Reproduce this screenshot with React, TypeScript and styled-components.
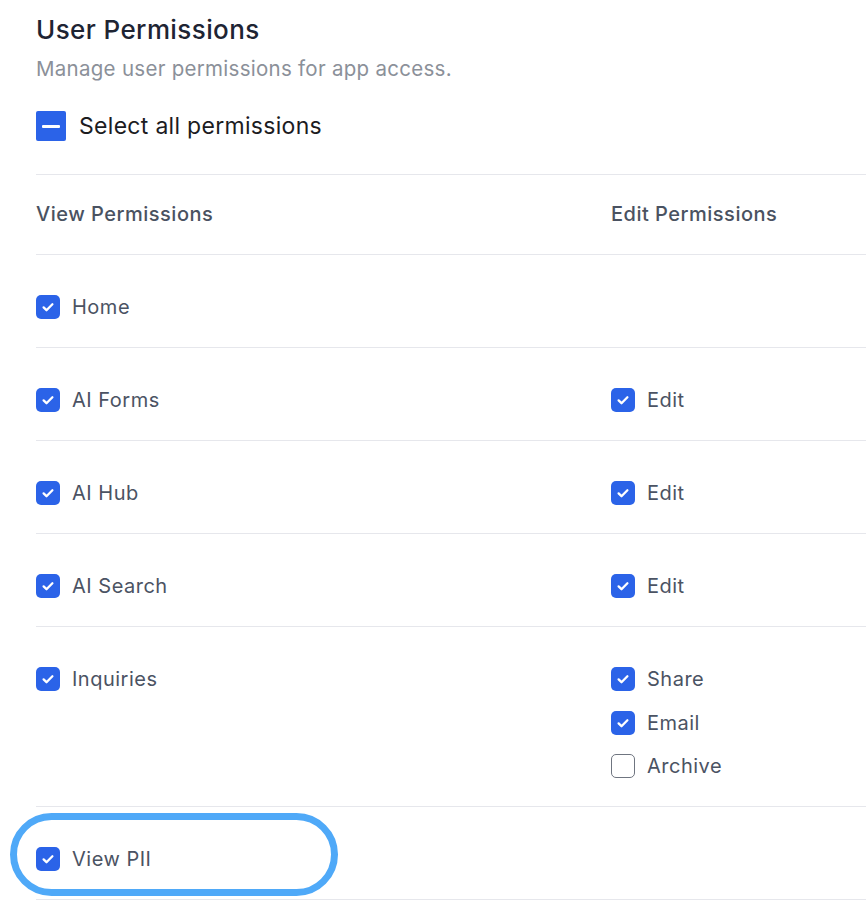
import React from 'react';
import styled, { createGlobalStyle } from 'styled-components';

const GlobalStyle = createGlobalStyle`
  html, body {
    margin: 0;
    padding: 0;
    background: #ffffff;
    overflow: hidden;
  }
  body {
    font-family: Inter, "Noto Sans", "Liberation Sans", sans-serif;
    -webkit-font-smoothing: antialiased;
  }
`;

type Perm = { label: string; checked: boolean };

type Row = {
  view: Perm;
  edit: Perm[];
  highlight?: boolean;
};

const rows: Row[] = [
  { view: { label: 'Home', checked: true }, edit: [] },
  { view: { label: 'AI Forms', checked: true }, edit: [{ label: 'Edit', checked: true }] },
  { view: { label: 'AI Hub', checked: true }, edit: [{ label: 'Edit', checked: true }] },
  { view: { label: 'AI Search', checked: true }, edit: [{ label: 'Edit', checked: true }] },
  {
    view: { label: 'Inquiries', checked: true },
    edit: [
      { label: 'Share', checked: true },
      { label: 'Email', checked: true },
      { label: 'Archive', checked: false },
    ],
  },
  { view: { label: 'View PII', checked: true }, edit: [], highlight: true },
];

const Page = styled.div`
  padding: 14px 0 0 36px;
  width: 830px;
`;

const Title = styled.h1`
  margin: 0;
  font-size: 26px;
  line-height: 32px;
  font-weight: 500;
  color: #1e2433;
  letter-spacing: 0.4px;
`;

const Subtitle = styled.p`
  margin: 10px 0 0;
  font-size: 20.5px;
  line-height: 26px;
  letter-spacing: 0.28px;
  color: #8b9099;
`;

const SelectAll = styled.label`
  display: flex;
  align-items: center;
  gap: 13px;
  margin-top: 29px;
  height: 30px;
  font-size: 23px;
  letter-spacing: 0.3px;
  color: #1c1c1f;
`;

const BigBox = styled.span`
  width: 30px;
  height: 30px;
  border-radius: 2px;
  background: #2b63e8;
  display: flex;
  align-items: center;
  justify-content: center;

  &::after {
    content: '';
    width: 18px;
    height: 3px;
    border-radius: 1px;
    background: #ffffff;
  }
`;

const Table = styled.div`
  margin-top: 33px;
  border-top: 1px solid #e6e7ec;
`;

const Grid = styled.div<{ $head?: boolean }>`
  position: relative;
  display: grid;
  grid-template-columns: 575px 1fr;
  padding: ${(p) => (p.$head ? '27px 0 28px' : '36px 0 24px')};
  border-bottom: 1px solid #e6e7ec;
`;

const HeadCell = styled.div`
  font-size: 20px;
  line-height: 24px;
  letter-spacing: 0.5px;
  font-weight: 500;
  color: #4a5261;
`;

const Stack = styled.div`
  display: flex;
  flex-direction: column;
  gap: 11.5px;
`;

const Item = styled.label`
  display: flex;
  align-items: center;
  gap: 12px;
  height: 32px;
  font-size: 20px;
  letter-spacing: 0.5px;
  color: #4b5363;
`;

const Box = styled.span<{ $checked: boolean }>`
  box-sizing: border-box;
  flex: none;
  width: 24px;
  height: 24px;
  border-radius: 5px;
  display: flex;
  align-items: center;
  justify-content: center;
  background: ${(p) => (p.$checked ? '#2b63e8' : '#ffffff')};
  border: ${(p) => (p.$checked ? 'none' : '1.5px solid #6f7580')};
`;

const Highlight = styled.span`
  position: absolute;
  left: -26px;
  top: 6px;
  width: 328px;
  height: 83px;
  box-sizing: border-box;
  border: 7px solid #4fa9f8;
  border-radius: 42px;
  pointer-events: none;
`;

function Check({ checked }: { checked: boolean }) {
  return (
    <Box $checked={checked}>
      {checked && (
        <svg width="16" height="16" viewBox="0 0 16 16" fill="none">
          <path
            d="M3.6 8.4l2.9 2.8L12.4 5.2"
            stroke="#ffffff"
            strokeWidth="2.3"
            strokeLinecap="round"
            strokeLinejoin="round"
          />
        </svg>
      )}
    </Box>
  );
}

function PermItem({ perm }: { perm: Perm }) {
  return (
    <Item>
      <Check checked={perm.checked} />
      {perm.label}
    </Item>
  );
}

export default function App() {
  return (
    <>
      <GlobalStyle />
      <Page>
        <Title>User Permissions</Title>
        <Subtitle>Manage user permissions for app access.</Subtitle>
        <SelectAll>
          <BigBox />
          Select all permissions
        </SelectAll>
        <Table>
          <Grid $head>
            <HeadCell>View Permissions</HeadCell>
            <HeadCell>Edit Permissions</HeadCell>
          </Grid>
          {rows.map((row) => (
            <Grid key={row.view.label}>
              {row.highlight && <Highlight />}
              <Stack>
                <PermItem perm={row.view} />
              </Stack>
              <Stack>
                {row.edit.map((e) => (
                  <PermItem key={e.label} perm={e} />
                ))}
              </Stack>
            </Grid>
          ))}
        </Table>
      </Page>
    </>
  );
}
